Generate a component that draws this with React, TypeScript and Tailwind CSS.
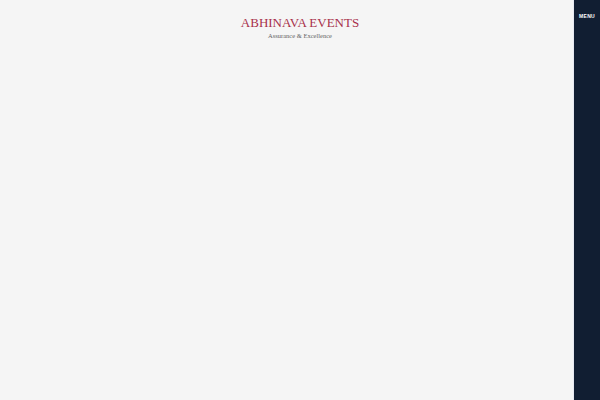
export default function App() {
  return (
    <div className="relative w-[600px] h-[400px] bg-[#f5f5f5] overflow-hidden">
      <header className="flex flex-col items-center pt-[16px]">
        <h1 className="text-[13px] leading-[14px] text-[#a8304a]" style={{ fontFamily: '"Liberation Serif", serif' }}>
          ABHINAVA EVENTS
        </h1>
        <p className="mt-[2px] text-[6.5px] leading-[8px] text-[#666]" style={{ fontFamily: '"Liberation Serif", serif' }}>
          Assurance &amp; Excellence
        </p>
      </header>
      <aside className="absolute top-0 right-0 h-full w-[27px] bg-[#111e32] border-l border-[#e6e9f2] flex justify-center">
        <span className="mt-[13px] text-[5px] font-bold tracking-[0.3px] text-white" style={{ fontFamily: '"Liberation Sans", sans-serif' }}>
          MENU
        </span>
      </aside>
    </div>
  );
}
